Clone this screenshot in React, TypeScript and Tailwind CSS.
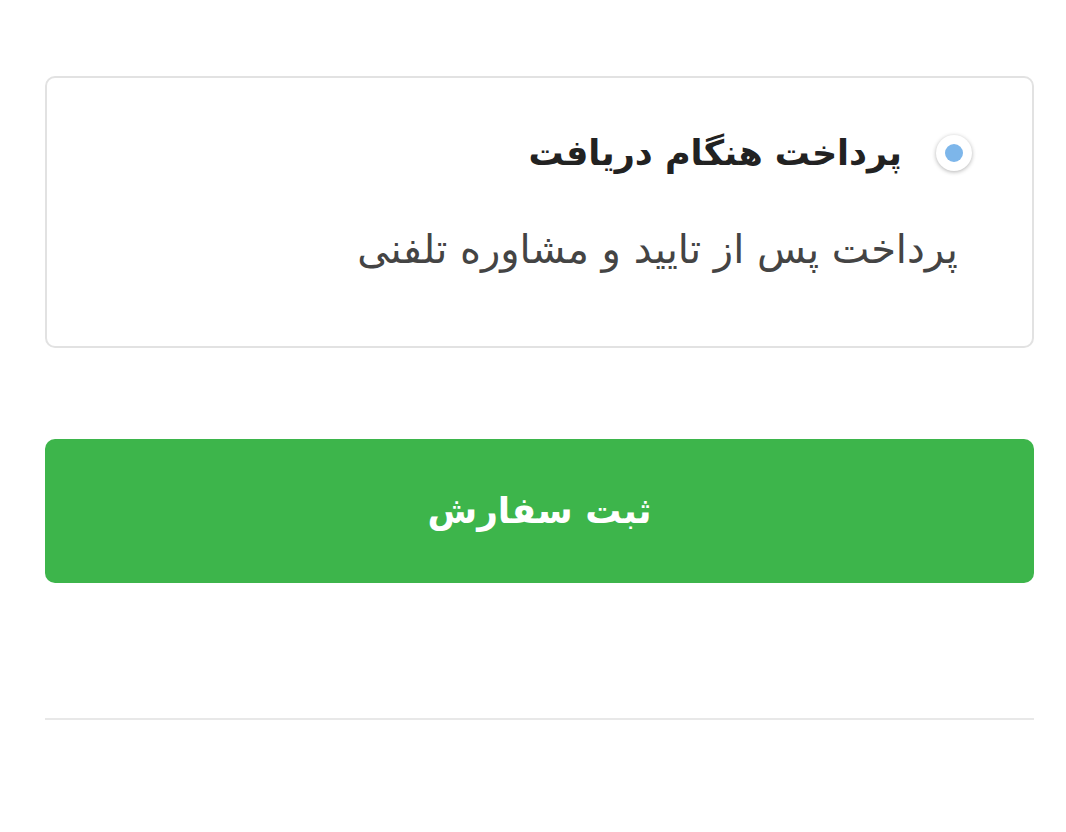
export default function App() {
  return (
    <div dir="rtl" className="w-[1066px] h-[832px] bg-white pl-[45px] pr-[32px] pt-[76px]" style={{ fontFamily: '"DejaVu Sans", sans-serif' }}>
      <div className="h-[272px] rounded-[10px] border-2 border-[#e2e2e2] pr-[60px] pt-[55px]">
        <div className="flex items-center gap-[34px]">
          <div className="w-[36px] h-[36px] rounded-full bg-white shadow-[0_1px_4px_rgba(0,0,0,0.3)] flex items-center justify-center">
            <div className="w-[18px] h-[18px] rounded-full bg-[#7db6ea]" />
          </div>
          <div className="text-[35px] font-bold text-[#222] leading-[40px]">پرداخت هنگام دریافت</div>
        </div>
        <div className="mt-[54px] mr-[14px] text-[40px] text-[#444] leading-[44px]">پرداخت پس از تایید و مشاوره تلفنی</div>
      </div>
      <button className="mt-[91px] w-full h-[144px] rounded-[10px] bg-[#3db54b] text-white text-[36px] font-bold flex items-center justify-center">
        ثبت سفارش
      </button>
      <div className="mt-[135px] h-[2px] bg-[#e8e8e8]" />
    </div>
  );
}
